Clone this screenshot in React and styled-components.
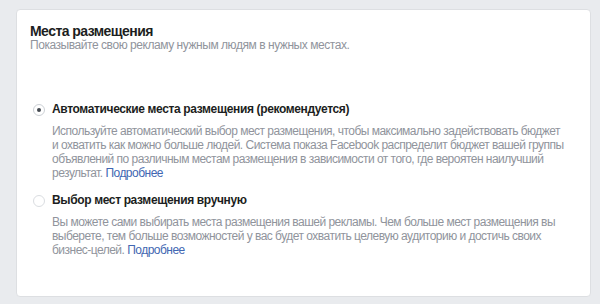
import React from "react";
import styled, { createGlobalStyle } from "styled-components";

const Global = createGlobalStyle`
  html, body { margin: 0; padding: 0; background: #e9ebee; }
  body { font-family: "Liberation Sans", Arial, sans-serif; -webkit-font-smoothing: antialiased; }
`;

const Page = styled.div`
  padding: 9px 9px 7px 16px;
  height: 304px;
  box-sizing: border-box;
`;

const Card = styled.section`
  box-sizing: border-box;
  height: 288px;
  background: #fff;
  border: 1px solid #dddfe2;
  border-radius: 4px;
  padding: 14px 13px 0 13px;
  display: flex;
  flex-direction: column;
`;

const Title = styled.h2`
  margin: 0;
  font-size: 14px;
  line-height: 14px;
  font-weight: bold;
  letter-spacing: -0.55px;
  color: #1c1e21;
`;

const Subtitle = styled.p`
  margin: 0;
  font-size: 12px;
  line-height: 14px;
  letter-spacing: -0.45px;
  color: #90949c;
`;

const Options = styled.div`
  display: flex;
  flex-direction: column;
  gap: 13px;
  margin-top: 50px;
  padding-left: 3px;
`;

const Option = styled.div`
  display: grid;
  grid-template-columns: 12px 1fr;
  column-gap: 7px;
`;

const Radio = styled.span`
  box-sizing: border-box;
  width: 12px;
  height: 12px;
  margin-top: 2px;
  border-radius: 50%;
  border: 1px solid ${(p) => (p.$checked ? "#ccd0d5" : "#dadde1")};
  background: #fff;
  display: flex;
  align-items: center;
  justify-content: center;
  &::after {
    content: "";
    display: ${(p) => (p.$checked ? "block" : "none")};
    width: 4px;
    height: 4px;
    border-radius: 50%;
    background: #444950;
  }
`;

const Label = styled.div`
  font-size: 12px;
  line-height: 14px;
  font-weight: bold;
  letter-spacing: -0.36px;
  color: #1c1e21;
`;

const Desc = styled.p`
  grid-column: 2;
  margin: 8px 0 0;
  font-size: 12px;
  line-height: 14px;
  letter-spacing: -0.52px;
  color: #90949c;
  white-space: nowrap;
`;

const Link = styled.a`
  color: #4267b2;
  text-decoration: none;
`;

export default function App() {
  return (
    <>
      <Global />
      <Page>
        <Card>
          <Title>Места размещения</Title>
          <Subtitle>Показывайте свою рекламу нужным людям в нужных местах.</Subtitle>
          <Options>
            <Option>
              <Radio $checked />
              <Label>Автоматические места размещения (рекомендуется)</Label>
              <Desc>
                Используйте автоматический выбор мест размещения, чтобы максимально задействовать бюджет
                <br />
                и охватить как можно больше людей. Система показа Facebook распределит бюджет вашей группы
                <br />
                объявлений по различным местам размещения в зависимости от того, где вероятен наилучший
                <br />
                результат. <Link href="#">Подробнее</Link>
              </Desc>
            </Option>
            <Option>
              <Radio />
              <Label>Выбор мест размещения вручную</Label>
              <Desc>
                Вы можете сами выбирать места размещения вашей рекламы. Чем больше мест размещения вы
                <br />
                выберете, тем больше возможностей у вас будет охватить целевую аудиторию и достичь своих
                <br />
                бизнес-целей. <Link href="#">Подробнее</Link>
              </Desc>
            </Option>
          </Options>
        </Card>
      </Page>
    </>
  );
}
